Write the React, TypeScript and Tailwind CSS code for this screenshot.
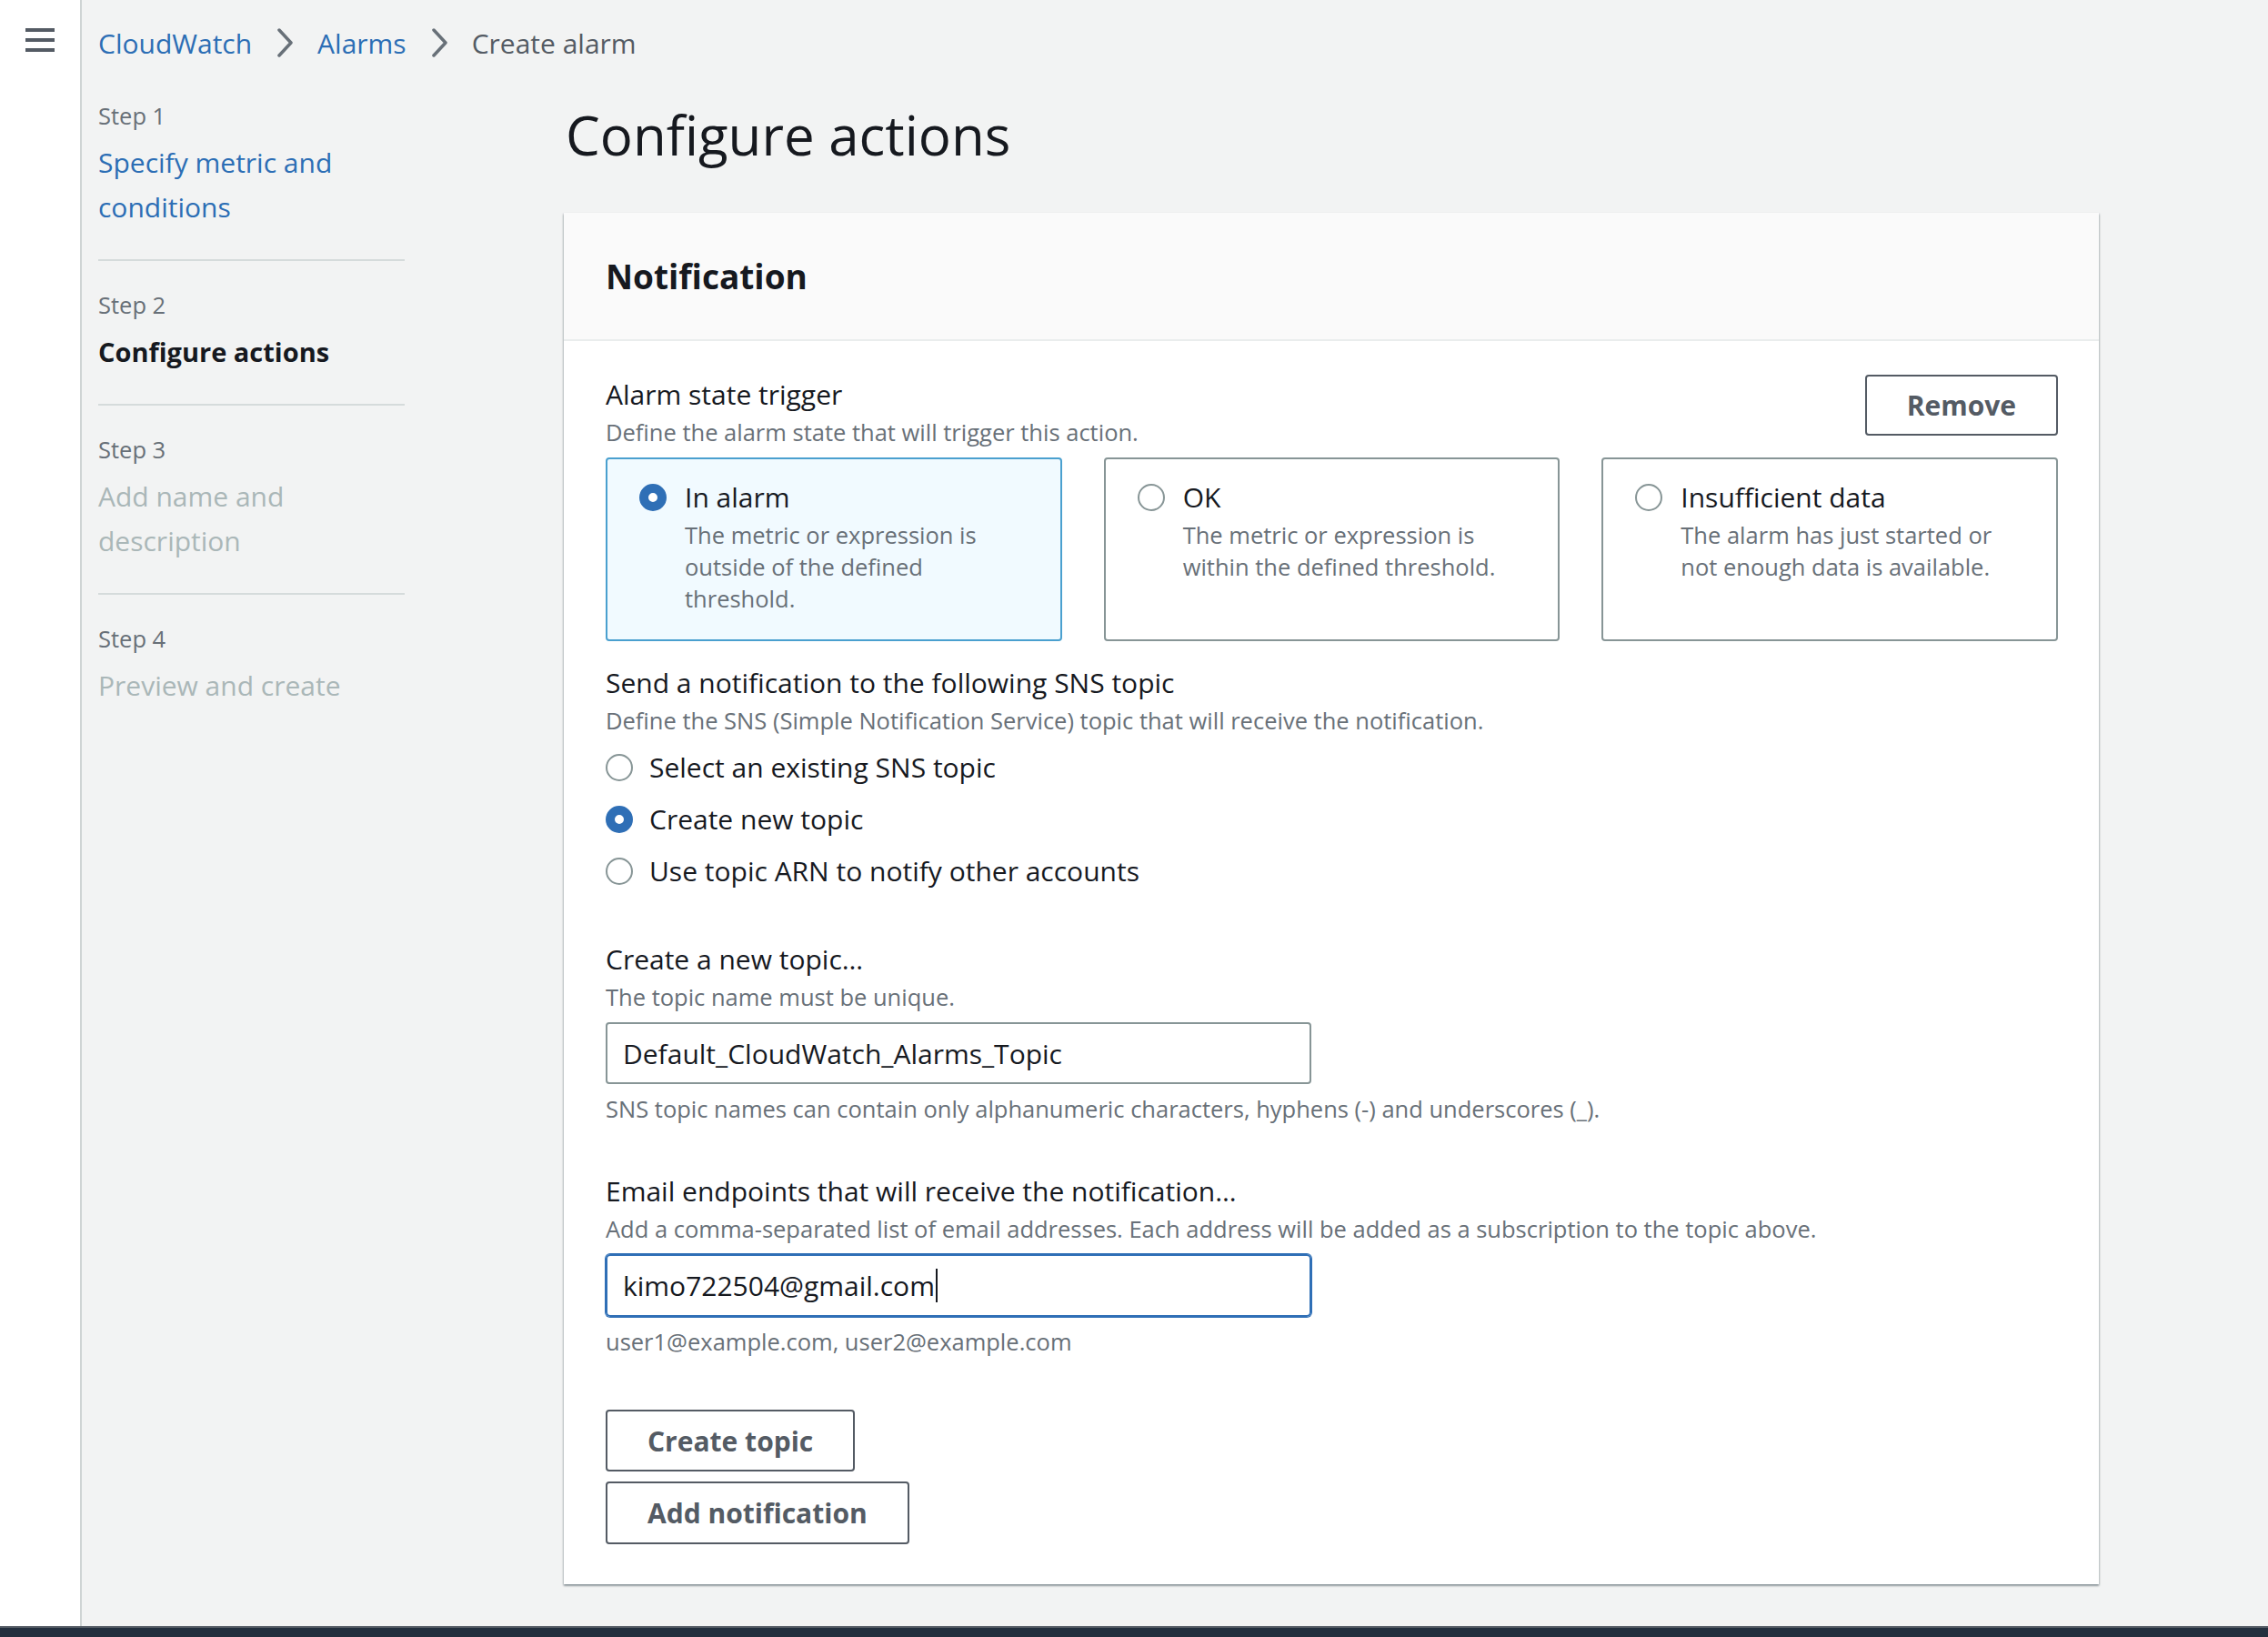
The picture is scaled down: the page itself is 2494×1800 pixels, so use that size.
import React from 'react';

type StepProps = {
  label: string;
  title: string[];
  state: 'link' | 'current' | 'disabled';
  divider?: boolean;
};

const Step: React.FC<StepProps> = ({ label, title, state, divider }) => {
  let titleClass = 'text-[30px] text-[#aab7b8]';
  if (state === 'link') titleClass = 'text-[30px] text-[#2c6eb5]';
  if (state === 'current') titleClass = 'text-[29px] font-bold text-[#16191f]';
  return (
    <div className={`pt-[31px] pb-[33px] ${divider ? 'border-b-2 border-[#d5dbdb]' : ''}`}>
      <div className="text-[25.5px] leading-[35px] text-[#687078]">{label}</div>
      <div className={`mt-[9px] leading-[49px] ${titleClass}`}>
        {title.map((line) => (
          <div key={line}>{line}</div>
        ))}
      </div>
    </div>
  );
};

const Radio: React.FC<{ checked?: boolean }> = ({ checked }) =>
  checked ? (
    <span className="block h-[30px] w-[30px] shrink-0 rounded-full border-[10px] border-[#2f6fb6] bg-white" />
  ) : (
    <span className="block h-[30px] w-[30px] shrink-0 rounded-full border-2 border-[#879596] bg-white" />
  );

const Chevron = () => (
  <svg width="20" height="32" viewBox="0 0 20 32" fill="none">
    <path d="M4 2 L17 16 L4 30" stroke="#687078" strokeWidth="3.5" strokeLinecap="round" strokeLinejoin="round" />
  </svg>
);

type TileProps = { title: string; lines: string[]; checked?: boolean };

const Tile: React.FC<TileProps> = ({ title, lines, checked }) => (
  <div
    className={`flex gap-[20px] rounded-[4px] border-2 px-[35px] pt-[18px] pb-[27px] ${
      checked ? 'border-[#4aa0cf] bg-[#f1faff]' : 'border-[#879596] bg-white'
    }`}
  >
    <div className="mt-[9px]">
      <Radio checked={checked} />
    </div>
    <div>
      <div className="text-[30px] leading-[48px] text-[#16191f]">{title}</div>
      <div className="text-[25.5px] leading-[35px] text-[#687078]">
        {lines.map((l) => (
          <div key={l}>{l}</div>
        ))}
      </div>
    </div>
  </div>
);

const Label: React.FC<{ children: React.ReactNode; className?: string }> = ({ children, className }) => (
  <div className={`text-[30px] leading-[48px] text-[#16191f] ${className ?? ''}`}>{children}</div>
);

const Desc: React.FC<{ children: React.ReactNode; className?: string }> = ({ children, className }) => (
  <div className={`text-[25.5px] leading-[35px] text-[#687078] ${className ?? ''}`}>{children}</div>
);

export default function App() {
  return (
    <div className="flex h-[1800px] flex-col overflow-hidden bg-[#f2f3f3] font-['Open_Sans',sans-serif] text-[#16191f]">
      <div className="flex min-h-0 flex-1">
        {/* left rail */}
        <div className="w-[90px] shrink-0 border-r-2 border-[#cfd4d4] bg-white pt-[31px]">
          <div className="mx-auto flex w-[32px] flex-col gap-[7px]">
            <span className="h-[4px] bg-[#545b64]" />
            <span className="h-[4px] bg-[#545b64]" />
            <span className="h-[4px] bg-[#545b64]" />
          </div>
        </div>

        <div className="flex-1 pl-[18px]">
          {/* breadcrumbs */}
          <div className="mt-[23px] flex h-[48px] items-center gap-[26px] text-[30px]">
            <span className="text-[#2c6eb5]">CloudWatch</span>
            <Chevron />
            <span className="text-[#2c6eb5]">Alarms</span>
            <Chevron />
            <span className="text-[#545b64]">Create alarm</span>
          </div>

          <div className="flex">
            {/* wizard steps */}
            <nav className="w-[337px] shrink-0 pt-[8px]">
              <Step label="Step 1" title={['Specify metric and', 'conditions']} state="link" divider />
              <Step label="Step 2" title={['Configure actions']} state="current" divider />
              <Step label="Step 3" title={['Add name and', 'description']} state="disabled" divider />
              <Step label="Step 4" title={['Preview and create']} state="disabled" />
            </nav>

            <main className="ml-[175px] w-[1688px] shrink-0">
              <h1 className="mt-[38px] ml-[2px] text-[60px] leading-[78px] font-normal">Configure actions</h1>

              <section className="mt-[47px] bg-white shadow-[0_2px_2px_0_rgba(0,28,36,0.3),1px_1px_2px_0_rgba(0,28,36,0.15),-1px_1px_2px_0_rgba(0,28,36,0.15)]">
                <div className="flex h-[141px] items-center border-b-2 border-[#eaeded] bg-[#fafafa] px-[46px]">
                  <h2 className="text-[37px] leading-[47px] font-bold">Notification</h2>
                </div>

                <div className="pt-[35px] pr-[45px] pb-[44px] pl-[46px]">
                  <div className="flex items-start justify-between">
                    <div>
                      <Label>Alarm state trigger</Label>
                      <Desc>Define the alarm state that will trigger this action.</Desc>
                    </div>
                    <button className="mt-[2px] h-[67px] rounded-[4px] border-2 border-[#545b64] px-[44px] text-[30px] font-bold text-[#545b64]">
                      Remove
                    </button>
                  </div>

                  <div className="mt-[10px] grid grid-cols-3 gap-[46px]">
                    <Tile
                      checked
                      title="In alarm"
                      lines={['The metric or expression is', 'outside of the defined', 'threshold.']}
                    />
                    <Tile title="OK" lines={['The metric or expression is', 'within the defined threshold.']} />
                    <Tile
                      title="Insufficient data"
                      lines={['The alarm has just started or', 'not enough data is available.']}
                    />
                  </div>

                  <Label className="mt-[22px]">Send a notification to the following SNS topic</Label>
                  <Desc>Define the SNS (Simple Notification Service) topic that will receive the notification.</Desc>

                  <div className="mt-[10px] flex flex-col gap-[9px]">
                    {[
                      { t: 'Select an existing SNS topic', c: false },
                      { t: 'Create new topic', c: true },
                      { t: 'Use topic ARN to notify other accounts', c: false },
                    ].map((o) => (
                      <div key={o.t} className="flex h-[48px] items-center gap-[18px]">
                        <Radio checked={o.c} />
                        <span className="text-[30px] leading-[48px]">{o.t}</span>
                      </div>
                    ))}
                  </div>

                  <Label className="mt-[49px]">Create a new topic…</Label>
                  <Desc>The topic name must be unique.</Desc>
                  <div className="mt-[10px] flex h-[68px] w-[776px] items-center rounded-[4px] border-2 border-[#879596] px-[17px] text-[30px]">
                    Default_CloudWatch_Alarms_Topic
                  </div>
                  <Desc className="mt-[10px]">
                    SNS topic names can contain only alphanumeric characters, hyphens (-) and underscores (_).
                  </Desc>

                  <Label className="mt-[49px]">Email endpoints that will receive the notification…</Label>
                  <Desc>
                    Add a comma-separated list of email addresses. Each address will be added as a subscription to the
                    topic above.
                  </Desc>
                  <div className="mt-[10px] flex h-[69px] w-[776px] items-center rounded-[5px] border-2 border-[#2f6fb6] px-[17px] text-[30px] ring-1 ring-[#2f6fb6]">
                    <span>kimo722504@gmail.com</span>
                    <span className="ml-[1px] inline-block h-[37px] w-[2px] bg-[#16191f]" />
                  </div>
                  <Desc className="mt-[10px]">user1@example.com, user2@example.com</Desc>

                  <div className="mt-[57px] flex flex-col items-start gap-[11px]">
                    <button className="h-[68px] rounded-[4px] border-2 border-[#545b64] px-[44px] text-[30px] font-bold text-[#545b64]">
                      Create topic
                    </button>
                    <button className="h-[69px] rounded-[4px] border-2 border-[#545b64] px-[44px] text-[30px] font-bold text-[#545b64]">
                      Add notification
                    </button>
                  </div>
                </div>
              </section>
            </main>
          </div>
        </div>
      </div>
      <div className="h-[12px] shrink-0 border-t-2 border-[#545b64] bg-[#232f3e]" />
    </div>
  );
}
